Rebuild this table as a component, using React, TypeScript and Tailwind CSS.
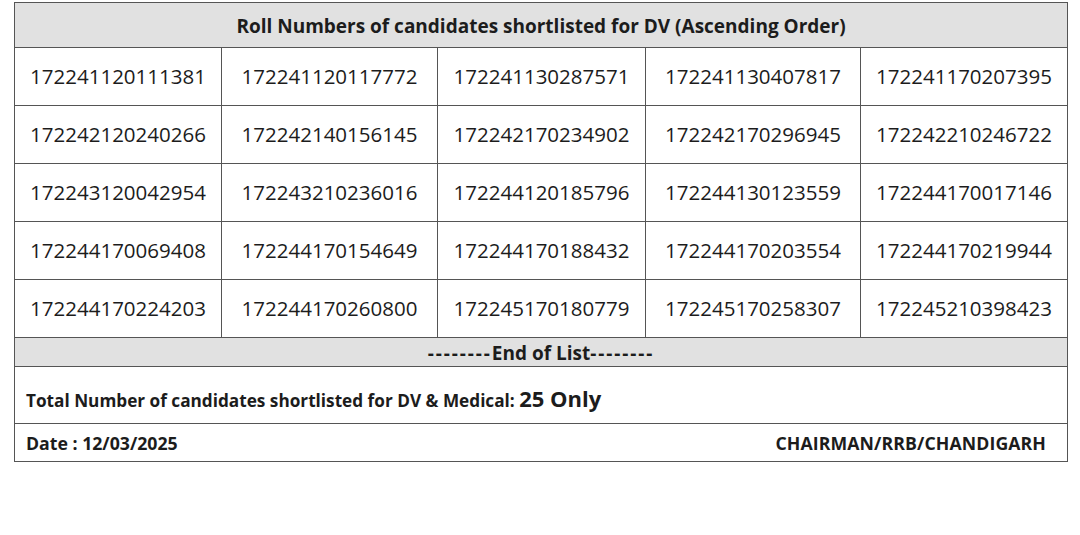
const rolls = [
  ["172241120111381", "172241120117772", "172241130287571", "172241130407817", "172241170207395"],
  ["172242120240266", "172242140156145", "172242170234902", "172242170296945", "172242210246722"],
  ["172243120042954", "172243210236016", "172244120185796", "172244130123559", "172244170017146"],
  ["172244170069408", "172244170154649", "172244170188432", "172244170203554", "172244170219944"],
  ["172244170224203", "172244170260800", "172245170180779", "172245170258307", "172245210398423"],
];

const colWidths = ["w-[207px]", "w-[216px]", "w-[208px]", "w-[215px]", "w-[207px]"];

export default function App() {
  return (
    <div className="w-[1080px] h-[535px] bg-white pt-[2px] pl-[14px] font-['Open_Sans',sans-serif] text-[#1c1c1c]">
      <table className="w-[1054px] border-collapse table-fixed">
        <colgroup>
          {colWidths.map((w, i) => (
            <col key={i} className={w} />
          ))}
        </colgroup>
        <tbody>
          <tr className="h-[45px] bg-[#e1e1e1]">
            <td colSpan={5} className="border border-[#555] text-center text-[19px] font-bold pt-[3px]">
              Roll Numbers of candidates shortlisted for DV (Ascending Order)
            </td>
          </tr>
          {rolls.map((row, r) => (
            <tr key={r} className="h-[58px]">
              {row.map((n) => (
                <td key={n} className="border border-[#555] text-center text-[20.5px]">
                  {n}
                </td>
              ))}
            </tr>
          ))}
          <tr className="h-[29px] bg-[#e1e1e1]">
            <td colSpan={5} className="border border-[#555] text-center text-[19px] font-bold leading-none pt-[3px]">
              <span className="tracking-[1.9px]">--------</span>
              End of List
              <span className="tracking-[1.9px]">--------</span>
            </td>
          </tr>
          <tr className="h-[57px]">
            <td colSpan={5} className="border border-[#555] pl-[11px] pt-[6px] text-[17.2px] font-bold">
              Total Number of candidates shortlisted for DV &amp; Medical:{" "}
              <span className="text-[22px]">25 Only</span>
            </td>
          </tr>
          <tr className="h-[38px]">
            <td colSpan={5} className="border border-[#555] px-[11px] pt-[2px] text-[17.7px] font-bold">
              <div className="flex justify-between pr-[10px]">
                <span>Date : 12/03/2025</span>
                <span className="tracking-[0.1px]">CHAIRMAN/RRB/CHANDIGARH</span>
              </div>
            </td>
          </tr>
        </tbody>
      </table>
    </div>
  );
}
